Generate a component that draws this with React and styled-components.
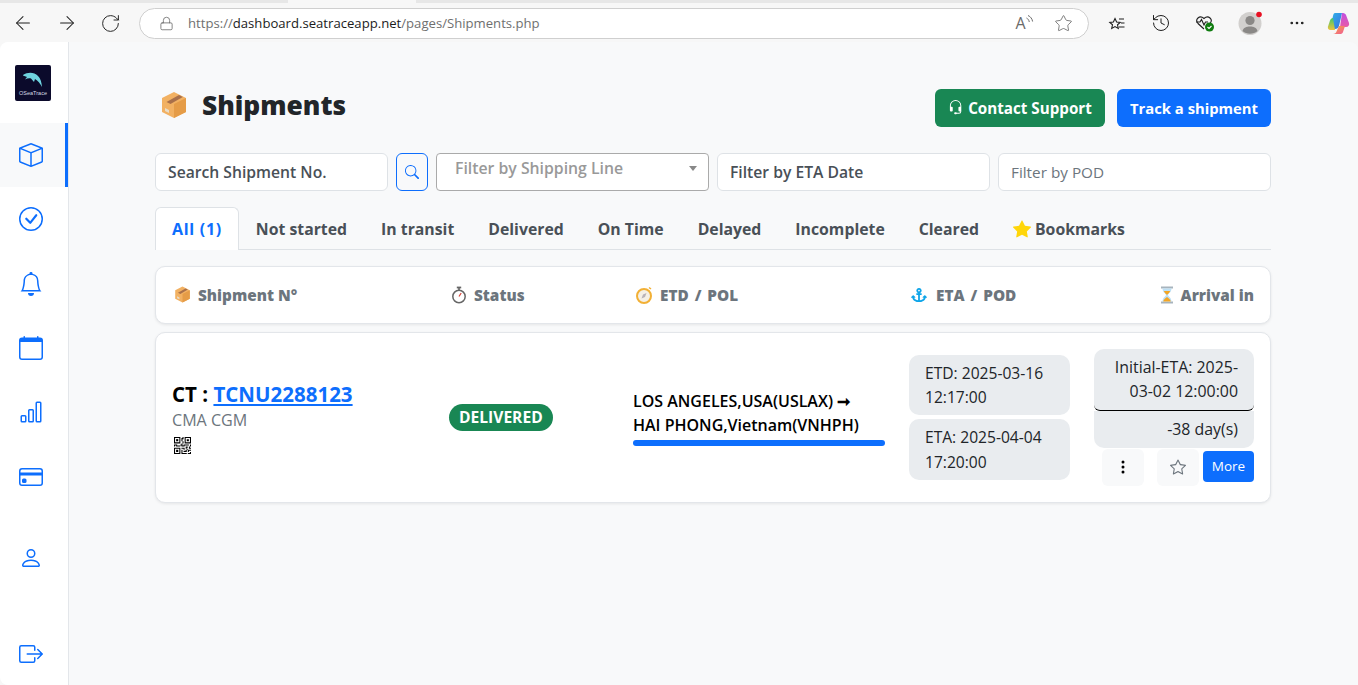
import React from "react";
import styled, { createGlobalStyle } from "styled-components";
import {
  BsBox,
  BsCheckCircle,
  BsBell,
  BsCalendar,
  BsBarChart,
  BsCreditCard,
  BsPerson,
  BsBoxArrowRight,
  BsSearch,
  BsHeadset,
  BsThreeDotsVertical,
  BsStar,
  BsStarFill,
  BsQrCode,
} from "react-icons/bs";
import { FaAnchor } from "react-icons/fa";
import { ArrowLeft, ArrowRight, RotateCw, Lock, Star, History, MoreHorizontal } from "lucide-react";

const GlobalStyle = createGlobalStyle`
  html, body {
    margin: 0;
    height: 685px;
    overflow: hidden;
    background: #f7f7f7;
    font-family: "Open Sans", "Noto Sans", sans-serif;
  }
  * { box-sizing: border-box; }
`;

const Window = styled.div`
  width: 1358px;
  height: 685px;
  display: flex;
  flex-direction: column;
`;
const TabStrip = styled.div`
  height: 3px;
  display: flex;
  background: #e7e7e7;
`;
const ActiveTabPiece = styled.div`
  width: 128px;
  margin-left: 288px;
  background: #f7f7f7;
`;
const Toolbar = styled.div`
  height: 39px;
  display: flex;
  align-items: center;
  padding: 2px 0 0 12px;
  color: #1f1f1f;
`;
const NavButton = styled.div`
  width: ${(p) => p.$width || 44}px;
  flex-shrink: 0;
  display: flex;
  align-items: center;
`;
const AddressBar = styled.div`
  width: 950px;
  height: 31px;
  flex-shrink: 0;
  margin-left: 5px;
  border: 1px solid #cfcfcf;
  border-radius: 16px;
  background: #fff;
  display: flex;
  align-items: center;
  padding: 0 15px 0 19px;
  color: #5f5f5f;
`;
const Url = styled.div`
  margin-left: 14px;
  flex-grow: 1;
  font-family: "Open Sans", sans-serif;
  font-size: 13.13px;
  color: #6f6f6f;
  b {
    font-weight: 400;
    color: #1b1b1b;
  }
`;
const AddressIcon = styled.div`
  display: flex;
  align-items: center;
  margin-left: ${(p) => p.$gap || 0}px;
`;
const ToolIcons = styled.div`
  flex-grow: 1;
  display: grid;
  grid-template-columns: 44px 44px 44px 48px 44px 38px;
  justify-items: center;
  align-items: center;
  padding-left: 6px;
`;

const Sheet = styled.div`
  flex-grow: 1;
  display: flex;
  min-height: 0;
  background: #f8f9fa;
  border-radius: 8px 8px 0 8px;
  overflow: hidden;
`;
const Sidebar = styled.nav`
  width: 69px;
  flex-shrink: 0;
  background: #fff;
  border-right: 1px solid #e3e6ea;
  display: flex;
  flex-direction: column;
  color: #0d6efd;
`;
const LogoBox = styled.div`
  height: 81px;
  flex-shrink: 0;
  padding: 23px 0 0 15px;
`;
const NavItem = styled.div`
  height: 64.3px;
  flex-shrink: 0;
  display: flex;
  align-items: center;
  padding-left: 19px;
  font-size: 24px;
  background: ${(p) => (p.$active ? "#f8f9fa" : "transparent")};
  border-right: 3px solid ${(p) => (p.$active ? "#0d6efd" : "transparent")};
`;
const PersonItem = styled(NavItem)`
  margin-top: 17px;
`;
const LogoutItem = styled(NavItem)`
  margin-top: 32px;
`;

const Main = styled.main`
  flex-grow: 1;
  padding: 47px 87px 0 86px;
`;
const Header = styled.header`
  height: 38px;
  display: flex;
  align-items: center;
  justify-content: space-between;
`;
const Title = styled.h1`
  margin: 0 0 6px 5px;
  display: flex;
  align-items: center;
  gap: 14px;
  font-size: 26.3px;
  font-weight: 800;
  color: #212529;
`;
const Actions = styled.div`
  display: flex;
  gap: 12px;
`;
const ActionButton = styled.button`
  height: 38px;
  width: ${(p) => p.$width}px;
  border: 0;
  border-radius: 6px;
  padding: 0 13px;
  display: flex;
  align-items: center;
  gap: 5px;
  color: #fff;
  font-family: inherit;
  font-size: ${(p) => p.$size}px;
  font-weight: 700;
  white-space: nowrap;
  background: ${(p) => p.$bg};
`;

const FilterRow = styled.div`
  margin-top: 26px;
  display: grid;
  grid-template-columns: 233px 32px 273px 273px 273px;
  gap: 8px;
`;
const FilterInput = styled.input`
  height: 38px;
  width: 100%;
  border: 1px solid #dee2e6;
  border-radius: 6px;
  background: #fff;
  padding: 0 12px;
  font-family: inherit;
  font-size: ${(p) => (p.$bold ? 15.7 : 15.3)}px;
  font-weight: ${(p) => (p.$bold ? 600 : 400)};
  outline: none;
  &::placeholder {
    color: ${(p) => (p.$bold ? "#495057" : "#6c757d")};
    opacity: 1;
  }
`;
const SearchButton = styled.button`
  height: 38px;
  border: 1px solid #0d6efd;
  border-radius: 6px;
  background: transparent;
  color: #0d6efd;
  padding: 0;
  font-size: 14px;
  display: flex;
  align-items: center;
  justify-content: center;
`;
const SelectBox = styled.div`
  height: 38px;
  border: 1px solid #aaa;
  border-radius: 4px;
  background: #fff;
  display: flex;
  justify-content: space-between;
  padding: 3px 11px 0 18px;
  font-size: 15.8px;
  font-weight: 600;
  color: #999;
`;
const Caret = styled.span`
  width: 0;
  height: 0;
  margin-top: 9px;
  border-left: 4px solid transparent;
  border-right: 4px solid transparent;
  border-top: 5px solid #888;
`;

const Tabs = styled.div`
  margin-top: 16px;
  height: 43px;
  display: flex;
  border-bottom: 1px solid #dee2e6;
`;
const Tab = styled.div`
  height: 43px;
  padding: 0 16px;
  display: flex;
  align-items: center;
  gap: 4px;
  border: 1px solid ${(p) => (p.$active ? "#dee2e6" : "transparent")};
  border-bottom: 0;
  border-radius: 6px 6px 0 0;
  background: ${(p) => (p.$active ? "#fff" : "transparent")};
  color: ${(p) => (p.$active ? "#0d6efd" : "#495057")};
  font-size: ${(p) => (p.$active ? 16 : 15.8)}px;
  font-weight: 700;
  letter-spacing: ${(p) => (p.$active ? "0.7px" : "0")};
  white-space: nowrap;
`;
const GoldStar = styled.span`
  display: flex;
  color: #ffd60a;
  font-size: 18px;
`;

const Card = styled.div`
  background: #fff;
  border: 1px solid #e3e6ea;
  border-radius: 10px;
  box-shadow: 0 1px 3px rgba(0, 0, 0, 0.08);
  display: grid;
  grid-template-columns: 277px 184px 276px 185px 160px;
  padding: 0 16px;
`;
const HeadCard = styled(Card)`
  margin-top: 16px;
  height: 58px;
  align-items: center;
`;
const RowCard = styled(Card)`
  margin-top: 8px;
  height: 171px;
  align-items: center;
`;
const HeadCell = styled.div`
  display: flex;
  align-items: center;
  justify-content: ${(p) => (p.$end ? "flex-end" : "flex-start")};
  gap: ${(p) => p.$gap || 7}px;
  padding-left: ${(p) => (p.$end ? 0 : 2)}px;
  font-size: 15.3px;
  font-weight: 800;
  word-spacing: ${(p) => p.$words || 0}px;
  color: #6c757d;
`;
const Ct = styled.div`
  font-size: 20.5px;
  font-weight: 700;
  color: #000;
  a {
    color: #0d6efd;
    text-decoration: underline;
  }
`;
const Carrier = styled.div`
  margin-top: 1px;
  font-size: 16.1px;
  color: #6c757d;
`;
const Qr = styled.div`
  margin: 6px 0 0 2px;
  font-size: 17px;
  display: flex;
  color: #000;
`;
const Badge = styled.span`
  display: inline-block;
  padding: 3px 10px;
  height: 27px;
  border-radius: 14px;
  background: #198754;
  color: #fff;
  font-size: 15.6px;
  font-weight: 700;
  line-height: 21px;
`;
const RouteText = styled.div`
  width: 252px;
  font-size: 16px;
  font-weight: 600;
  line-height: 24px;
  color: #000;
  white-space: nowrap;
`;
const ProgressBar = styled.div`
  width: 252px;
  height: 6px;
  margin-top: 3px;
  border-radius: 3px;
  background: #0d6efd;
`;
const DateStack = styled.div`
  width: 161px;
  display: flex;
  flex-direction: column;
  gap: 4px;
`;
const DatePill = styled.div`
  background: #e9ecef;
  border-radius: 10px;
  padding: 6px 16px;
  font-size: 15.6px;
  font-weight: 500;
  line-height: 24.3px;
  color: #212529;
`;
const ArrivalStack = styled.div`
  display: flex;
  flex-direction: column;
`;
const ArrivalPill = styled.div`
  background: #e9ecef;
  padding: 6px 16px 7px;
  text-align: right;
  font-size: 15.9px;
  font-weight: 500;
  line-height: 24px;
  color: #212529;
  border-radius: ${(p) => (p.$top ? "10px 10px 6px 6px" : "0 0 10px 10px")};
  border-bottom: ${(p) => (p.$top ? "1px solid #000" : "0")};
`;
const RowActions = styled.div`
  display: flex;
  align-items: flex-start;
  justify-content: flex-end;
  margin-top: 1px;
`;
const IconBtn = styled.button`
  width: 42px;
  height: 37px;
  border: 0;
  border-radius: 6px;
  background: #f8f9fa;
  padding: 0;
  margin-right: ${(p) => p.$mr}px;
  display: flex;
  align-items: center;
  justify-content: center;
  font-size: 16px;
  color: ${(p) => p.$color};
`;
const MoreBtn = styled.button`
  width: 51px;
  height: 31px;
  margin-top: 2px;
  border: 0;
  border-radius: 4px;
  background: #0d6efd;
  color: #fff;
  font-family: inherit;
  font-size: 13.5px;
  padding: 0;
`;

const BoxEmoji = ({ size }) => (
  <svg width={size} height={size} viewBox="0 0 28 28">
    <path d="M14 1 26 7v14l-12 6-12-6V7z" fill="#f2b162" />
    <path d="M14 13 26 7v14l-12 6z" fill="#e59c47" />
    <path d="M6.5 11 19 4l3.8 1.900L10.500 13z" fill="#a9704a" />
    <path d="M5 20l4 2v-3l-4-2z" fill="#e8dcc8" />
  </svg>
);
const StopwatchEmoji = () => (
  <svg width="16" height="18" viewBox="0 0 16 18">
    <circle cx="8" cy="10.500" r="6.200" fill="#fff" stroke="#666" strokeWidth="1.500" />
    <rect x="5.800" y="0.600" width="4.400" height="1.800" fill="#666" />
    <rect x="7.200" y="2" width="1.600" height="2.400" fill="#666" />
    <path d="M8 10.500 10.200 7" stroke="#d9453a" strokeWidth="1.200" />
  </svg>
);
const CompassEmoji = () => (
  <svg width="18" height="18" viewBox="0 0 18 18">
    <circle cx="9" cy="10" r="7" fill="#f5f0e6" stroke="#f2b035" strokeWidth="2" />
    <path d="M11.500 7 10 11l-3.500 1.500L8 8.500z" fill="#b8b2b8" />
    <path d="M14 1.500 16 3" stroke="#f2b035" strokeWidth="1.500" />
  </svg>
);
const HourglassEmoji = () => (
  <svg width="14" height="18" viewBox="0 0 14 18">
    <rect x="1" y="0.500" width="12" height="2" fill="#a7b4bd" />
    <rect x="1" y="15.500" width="12" height="2" fill="#a7b4bd" />
    <path d="M2.500 2.500h9c0 4-3.500 5-3.500 6.500s3.500 2.500 3.500 6.500h-9c0-4 3.500-5 3.500-6.500S2.500 6.500 2.500 2.500z" fill="#bde0f5" />
    <path d="M3.800 5h6.400C9.500 7 7.500 8 7 9 6.500 8 4.500 7 3.800 5zM3.200 15.500C3.500 13 6 12 7 11c1 1 3.500 2 3.800 4.500z" fill="#f5a623" />
  </svg>
);
const DolphinLogo = () => (
  <svg width="36" height="36" viewBox="0 0 36 36">
    <rect width="36" height="36" rx="2" fill="#0b0a2b" />
    <path d="M8 10c5-3 11-3 15 1 2.500 2.500 3.500 6 4 11-2-3.500-4-6.500-7-8l-1 3-3-3.500c-2-.5-4 0-6 1l2-2.500-4-1.500z" fill="#6fd3e0" />
    <text x="18" y="30" textAnchor="middle" fontFamily="Liberation Sans" fontSize="5.500" fill="#d7dbe4">OSeaTrace</text>
  </svg>
);
const ReadAloudIcon = () => (
  <svg width="20" height="24" viewBox="0 0 20 24" fill="none" stroke="#6b6b6b">
    <text x="1.500" y="18" fontFamily="Open Sans" fontSize="16" fill="#6b6b6b" stroke="none">A</text>
    <path d="M12.500 7c1.500.8 2.500 2.200 2.800 4M14 4.500c2.500 1 4.200 3.300 4.600 6" />
  </svg>
);
const FavoritesIcon = () => (
  <svg width="18" height="18" viewBox="0 0 18 18" fill="none" stroke="#1f1f1f" strokeWidth="1.100">
    <path d="M7 2.500 8.600 6l3.600.4-2.700 2.400.8 3.700L7 10.600l-3.300 1.900.8-3.700L1.800 6.400 5.400 6z" transform="translate(0 2)" />
    <path d="M11 5h5M13 9h3.500M11 13h5.500" />
  </svg>
);
const HealthIcon = () => (
  <svg width="20" height="18" viewBox="0 0 20 18" fill="none" stroke="#1f1f1f" strokeWidth="1.100">
    <path d="M9 15 3 9.500C-.500 5.500 4.500.500 9 4.500c4.500-4 9.500 1 6 5" />
    <path d="M1 8h4l1.500-2.500L9 11l1.500-3H13" />
    <circle cx="14.500" cy="13" r="4.500" fill="#107c10" stroke="none" />
    <path d="M12.500 13l1.500 1.500 2.500-2.500" stroke="#fff" />
  </svg>
);
const ProfileIcon = () => (
  <svg width="26" height="26" viewBox="0 0 26 26">
    <circle cx="12" cy="13.500" r="11.500" fill="#d2d0ce" />
    <circle cx="12" cy="10.500" r="4.600" fill="#8a8886" />
    <path d="M4.500 21c1-3.500 4-4.500 7.500-4.500s6.500 1 7.500 4.500c-4 3.500-11 3.500-15 0z" fill="#8a8886" />
    <circle cx="21" cy="4.500" r="2.800" fill="#e81123" />
  </svg>
);
const CopilotIcon = () => (
  <svg width="23" height="23" viewBox="0 0 23 23">
    <defs>
      <linearGradient id="cpA" x1="0" y1="0" x2="1" y2="1">
        <stop offset="0" stopColor="#2fb5e8" />
        <stop offset="1" stopColor="#3a6fe0" />
      </linearGradient>
      <linearGradient id="cpB" x1="0" y1="0" x2="1" y2="1">
        <stop offset="0" stopColor="#f7a93b" />
        <stop offset="1" stopColor="#f0589b" />
      </linearGradient>
      <linearGradient id="cpC" x1="0" y1="0" x2="0" y2="1">
        <stop offset="0" stopColor="#c04fe0" />
        <stop offset="1" stopColor="#e85aa8" />
      </linearGradient>
      <linearGradient id="cpD" x1="0" y1="0" x2="0" y2="1">
        <stop offset="0" stopColor="#3fc76b" />
        <stop offset="1" stopColor="#f0c33b" />
      </linearGradient>
    </defs>
    <path d="M8 1h7l-3 13c-.5 2-2 3-4 3H3l3-13C6.400 2 7 1 8 1z" fill="url(#cpA)" />
    <path d="M15 1h1c1.500 0 2.500 1 3 2l3 8c.5 2-.5 4-3 4h-6z" fill="url(#cpC)" />
    <path d="M6 6C4.500 6 3.500 7 3 8.500l-2 6c-.5 2 .5 3.500 2.500 3.500H8z" fill="url(#cpD)" />
    <path d="M12 14h6l-2 6c-.5 1.500-1.500 2-3 2H6c2 0 3-1 3.500-2.500z" fill="url(#cpB)" />
  </svg>
);

const TABS = ["Not started", "In transit", "Delivered", "On Time", "Delayed", "Incomplete", "Cleared"];

const App = () => (
  <Window>
    <GlobalStyle />
    <TabStrip>
      <ActiveTabPiece />
    </TabStrip>
    <Toolbar>
      <NavButton><ArrowLeft size={22} strokeWidth={1.1} /></NavButton>
      <NavButton><ArrowRight size={22} strokeWidth={1.1} /></NavButton>
      <NavButton $width={34}><RotateCw size={21} strokeWidth={1.1} /></NavButton>
      <AddressBar>
        <Lock size={15} strokeWidth={1.2} />
        <Url>https://<b>dashboard.seatraceapp.net</b>/pages/Shipments.php</Url>
        <AddressIcon><ReadAloudIcon /></AddressIcon>
        <AddressIcon $gap={20}><Star size={19} strokeWidth={1} /></AddressIcon>
      </AddressBar>
      <ToolIcons>
        <FavoritesIcon />
        <History size={20} strokeWidth={1.2} />
        <HealthIcon />
        <ProfileIcon />
        <MoreHorizontal size={18} strokeWidth={1.6} />
        <CopilotIcon />
      </ToolIcons>
    </Toolbar>
    <Sheet>
      <Sidebar>
        <LogoBox><DolphinLogo /></LogoBox>
        <NavItem $active><BsBox /></NavItem>
        <NavItem><BsCheckCircle /></NavItem>
        <NavItem><BsBell /></NavItem>
        <NavItem><BsCalendar /></NavItem>
        <NavItem><BsBarChart /></NavItem>
        <NavItem><BsCreditCard /></NavItem>
        <PersonItem><BsPerson /></PersonItem>
        <LogoutItem><BsBoxArrowRight /></LogoutItem>
      </Sidebar>
      <Main>
        <Header>
          <Title><BoxEmoji size={28} />Shipments</Title>
          <Actions>
            <ActionButton $bg="#198754" $width={170} $size={15.2}><BsHeadset />Contact Support</ActionButton>
            <ActionButton $bg="#0d6efd" $width={154} $size={14.8}>Track a shipment</ActionButton>
          </Actions>
        </Header>
        <FilterRow>
          <FilterInput $bold placeholder="Search Shipment No." />
          <SearchButton><BsSearch /></SearchButton>
          <SelectBox>Filter by Shipping Line<Caret /></SelectBox>
          <FilterInput $bold placeholder="Filter by ETA Date" />
          <FilterInput placeholder="Filter by POD" />
        </FilterRow>
        <Tabs>
          <Tab $active>All (1)</Tab>
          {TABS.map((name) => (
            <Tab key={name}>{name}</Tab>
          ))}
          <Tab><GoldStar><BsStarFill /></GoldStar>Bookmarks</Tab>
        </Tabs>
        <HeadCard>
          <HeadCell><BoxEmoji size={17} />Shipment N°</HeadCell>
          <HeadCell><StopwatchEmoji />Status</HeadCell>
          <HeadCell $words={2}><CompassEmoji />ETD / POL</HeadCell>
          <HeadCell $words={2} $gap={9}><FaAnchor color="#0ea5e9" size={16} />ETA / POD</HeadCell>
          <HeadCell $end><HourglassEmoji />Arrival in</HeadCell>
        </HeadCard>
        <RowCard>
          <div>
            <Ct>CT : <a href="#tcnu">TCNU2288123</a></Ct>
            <Carrier>CMA CGM</Carrier>
            <Qr><BsQrCode /></Qr>
          </div>
          <div><Badge>DELIVERED</Badge></div>
          <div>
            <RouteText>LOS ANGELES,USA(USLAX) ➞<br />HAI PHONG,Vietnam(VNHPH)</RouteText>
            <ProgressBar />
          </div>
          <DateStack>
            <DatePill>ETD: 2025-03-16 12:17:00</DatePill>
            <DatePill>ETA: 2025-04-04 17:20:00</DatePill>
          </DateStack>
          <ArrivalStack>
            <ArrivalPill $top>Initial-ETA: 2025-03-02 12:00:00</ArrivalPill>
            <ArrivalPill>-38 day(s)</ArrivalPill>
            <RowActions>
              <IconBtn $mr={13} $color="#000"><BsThreeDotsVertical /></IconBtn>
              <IconBtn $mr={4} $color="#6c757d"><BsStar /></IconBtn>
              <MoreBtn>More</MoreBtn>
            </RowActions>
          </ArrivalStack>
        </RowCard>
      </Main>
    </Sheet>
  </Window>
);

export default App;
